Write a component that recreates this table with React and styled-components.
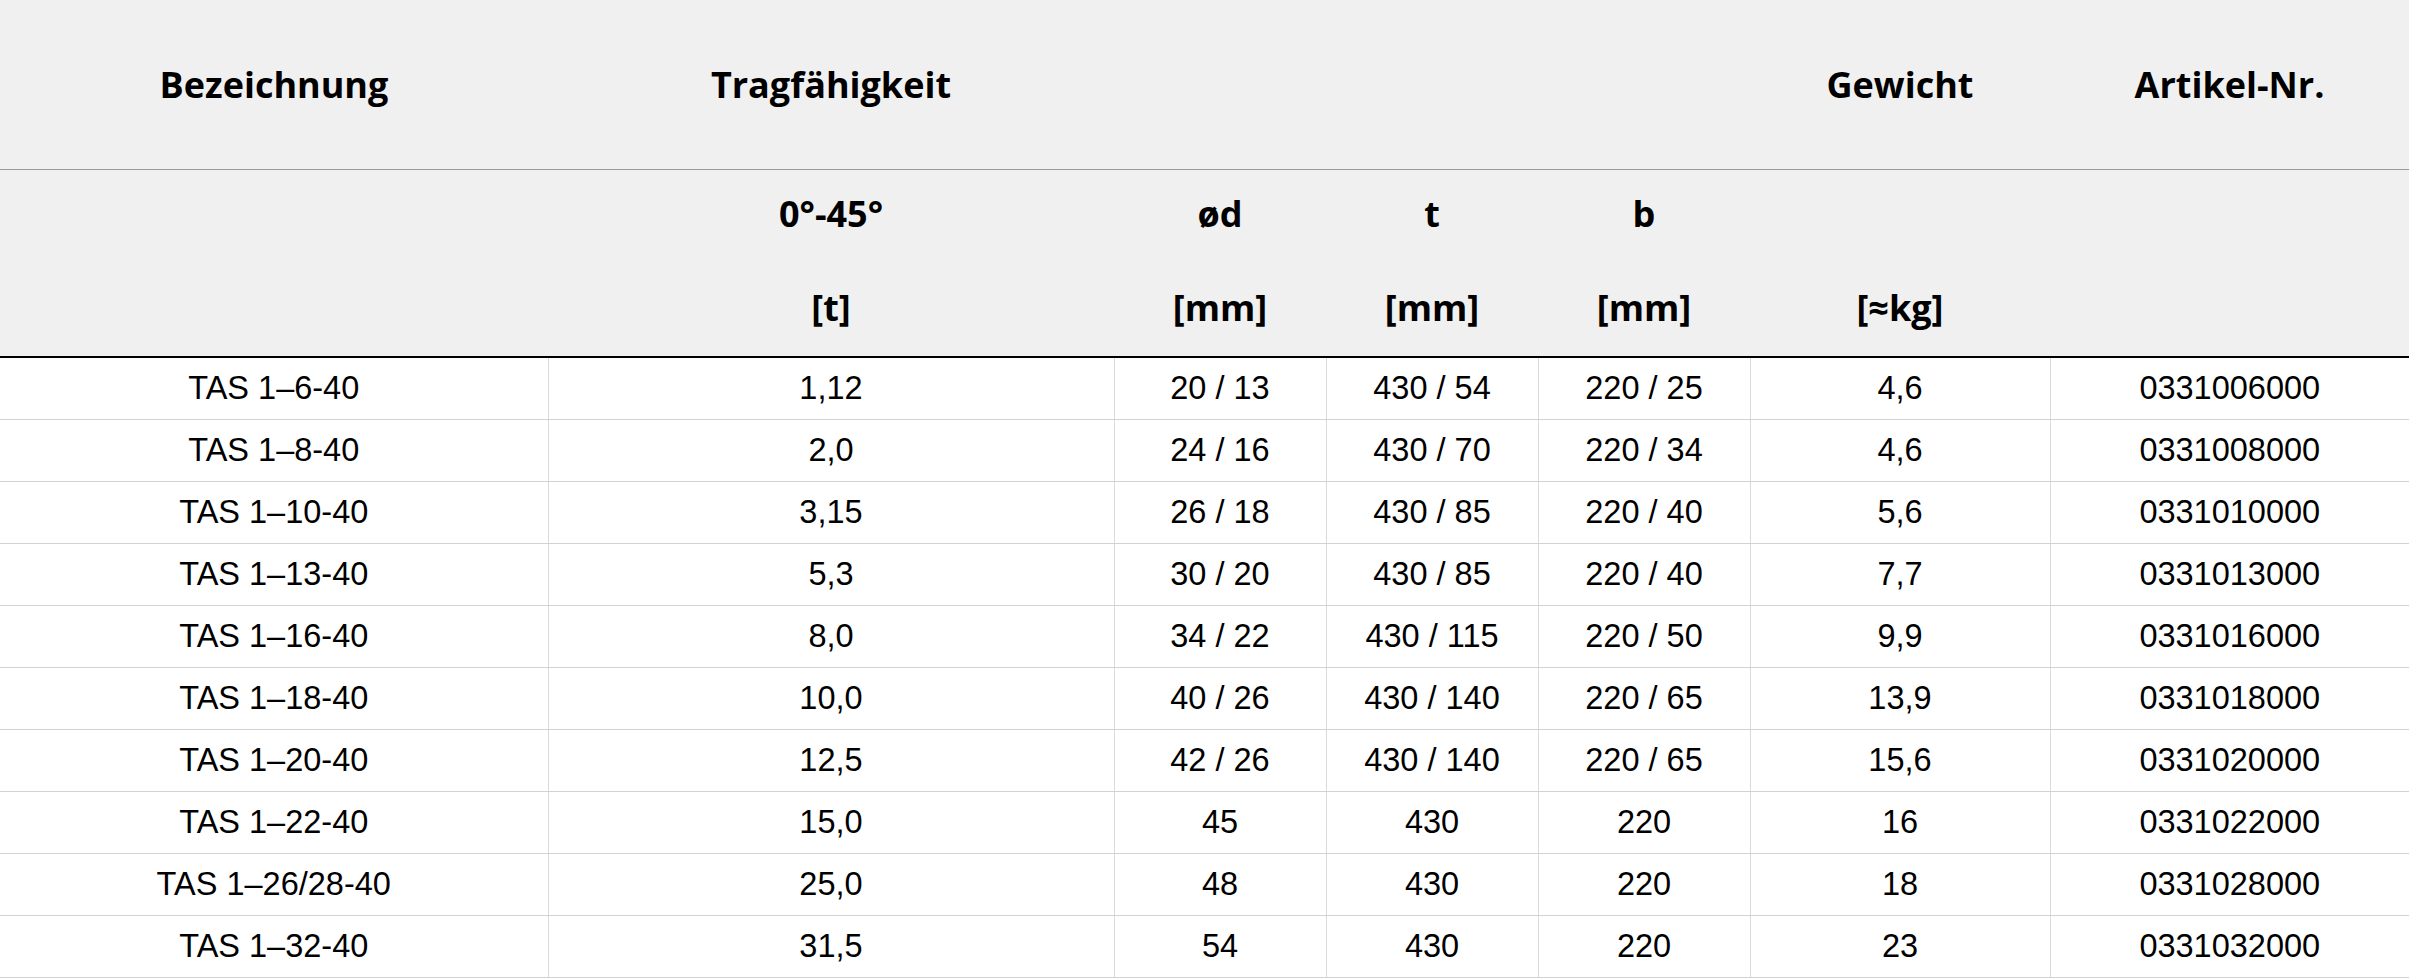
import React from "react";
import styled, { createGlobalStyle } from "styled-components";

const GlobalStyle = createGlobalStyle`
  html, body {
    margin: 0;
    padding: 0;
    background: #ffffff;
  }
`;

const rows = [
  ["TAS 1–6-40", "1,12", "20 / 13", "430 / 54", "220 / 25", "4,6", "0331006000"],
  ["TAS 1–8-40", "2,0", "24 / 16", "430 / 70", "220 / 34", "4,6", "0331008000"],
  ["TAS 1–10-40", "3,15", "26 / 18", "430 / 85", "220 / 40", "5,6", "0331010000"],
  ["TAS 1–13-40", "5,3", "30 / 20", "430 / 85", "220 / 40", "7,7", "0331013000"],
  ["TAS 1–16-40", "8,0", "34 / 22", "430 / 115", "220 / 50", "9,9", "0331016000"],
  ["TAS 1–18-40", "10,0", "40 / 26", "430 / 140", "220 / 65", "13,9", "0331018000"],
  ["TAS 1–20-40", "12,5", "42 / 26", "430 / 140", "220 / 65", "15,6", "0331020000"],
  ["TAS 1–22-40", "15,0", "45", "430", "220", "16", "0331022000"],
  ["TAS 1–26/28-40", "25,0", "48", "430", "220", "18", "0331028000"],
  ["TAS 1–32-40", "31,5", "54", "430", "220", "23", "0331032000"],
];

const widths = [548, 566, 212, 212, 212, 300, 359];

const App = () => {
  return (
    <>
      <GlobalStyle />
      <Table>
        <colgroup>
          {widths.map((w, i) => (
            <col key={i} style={{ width: w }} />
          ))}
        </colgroup>
        <thead>
          <TitleRow>
            <HeadCell>Bezeichnung</HeadCell>
            <HeadCell>Tragfähigkeit</HeadCell>
            <HeadCell colSpan={3} />
            <HeadCell>Gewicht</HeadCell>
            <HeadCell>Artikel-Nr.</HeadCell>
          </TitleRow>
          <SubRow>
            <HeadCell />
            <HeadCell>0°-45°</HeadCell>
            <HeadCell>ød</HeadCell>
            <HeadCell>t</HeadCell>
            <HeadCell>b</HeadCell>
            <HeadCell />
            <HeadCell />
          </SubRow>
          <SubRow $last>
            <HeadCell />
            <HeadCell>[t]</HeadCell>
            <HeadCell>[mm]</HeadCell>
            <HeadCell>[mm]</HeadCell>
            <HeadCell>[mm]</HeadCell>
            <HeadCell>[≈kg]</HeadCell>
            <HeadCell />
          </SubRow>
        </thead>
        <tbody>
          {rows.map((row) => (
            <BodyRow key={row[6]}>
              {row.map((value, i) => (
                <Cell key={i} $first={i === 0}>
                  {value}
                </Cell>
              ))}
            </BodyRow>
          ))}
        </tbody>
      </Table>
    </>
  );
};

export default App;

const Table = styled.table`
  width: 2409px;
  table-layout: fixed;
  border-collapse: collapse;
  border-spacing: 0;
`;

const HeadCell = styled.th`
  padding: 0;
  text-align: center;
  vertical-align: middle;
  font-family: "Open Sans", "Liberation Sans", sans-serif;
  font-weight: 700;
  font-size: 36px;
  color: #000000;
  background: #f0f0f0;
`;

const TitleRow = styled.tr`
  height: 169px;

  & > th {
    border-bottom: 1px solid #9a9a9a;
  }
`;

const SubRow = styled.tr`
  height: 94px;

  & > th {
    padding-bottom: 5px;
    border-bottom: ${(p) => (p.$last ? "2px solid #000000" : "none")};
  }
`;

const BodyRow = styled.tr`
  height: 62px;
`;

const Cell = styled.td`
  padding: 0;
  text-align: center;
  vertical-align: middle;
  font-family: "Liberation Sans", Arial, sans-serif;
  font-size: 32.5px;
  color: #000000;
  border-bottom: 1px solid #d2d2d2;
  border-left: ${(p) => (p.$first ? "none" : "1px solid #dadada")};
`;
